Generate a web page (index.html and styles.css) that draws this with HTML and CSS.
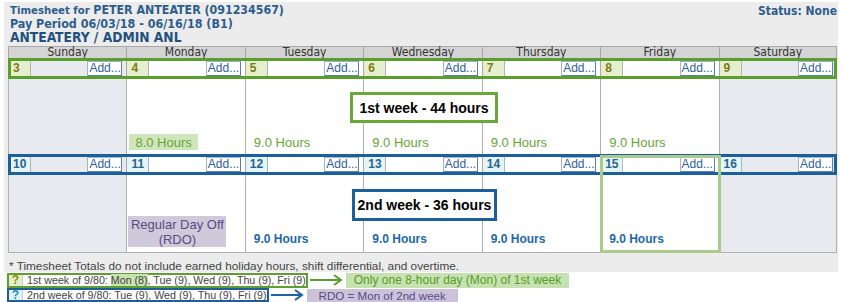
FILE: index.html
```html
<!DOCTYPE html>
<html lang="en">
<head>
  <meta charset="UTF-8" />
  <title>Timesheet - PETER ANTEATER</title>
  <link rel="stylesheet" href="styles.css">
</head>
<body>
  <div class="page">
    <div class="head">
      <div class="head-left">
        <div class="title"><span class="lbl">Timesheet for</span> <span class="who">PETER ANTEATER (091234567)</span></div>
        <div class="period">Pay Period 06/03/18 - 06/16/18 (B1)</div>
        <div class="dept">ANTEATERY / ADMIN ANL</div>
      </div>
      <div class="status">Status: None</div>
    </div>

    <div class="cal">
      <div class="days">
        <div>Sunday</div><div>Monday</div><div>Tuesday</div><div>Wednesday</div>
        <div>Thursday</div><div>Friday</div><div>Saturday</div>
      </div>

      <!-- week 1 -->
      <div class="dates wk1">
        <div class="date off"><span class="num">3</span><span class="fill"><button class="add">Add...</button></span></div>
        <div class="date"><span class="num">4</span><span class="fill"><button class="add">Add...</button></span></div>
        <div class="date"><span class="num">5</span><span class="fill"><button class="add">Add...</button></span></div>
        <div class="date"><span class="num">6</span><span class="fill"><button class="add">Add...</button></span></div>
        <div class="date"><span class="num">7</span><span class="fill"><button class="add">Add...</button></span></div>
        <div class="date"><span class="num">8</span><span class="fill"><button class="add">Add...</button></span></div>
        <div class="date off"><span class="num">9</span><span class="fill"><button class="add">Add...</button></span></div>
      </div>
      <div class="week wk1">
        <div class="day off"></div>
        <div class="day"><span class="hrs mon8">8.0 Hours</span></div>
        <div class="day"><span class="hrs">9.0 Hours</span></div>
        <div class="day"><span class="hrs">9.0 Hours</span></div>
        <div class="day"><span class="hrs">9.0 Hours</span></div>
        <div class="day"><span class="hrs">9.0 Hours</span></div>
        <div class="day off"></div>
      </div>

      <!-- week 2 -->
      <div class="dates wk2">
        <div class="date off"><span class="num">10</span><span class="fill"><button class="add">Add...</button></span></div>
        <div class="date"><span class="num">11</span><span class="fill"><button class="add">Add...</button></span></div>
        <div class="date"><span class="num">12</span><span class="fill"><button class="add">Add...</button></span></div>
        <div class="date"><span class="num">13</span><span class="fill"><button class="add">Add...</button></span></div>
        <div class="date"><span class="num">14</span><span class="fill"><button class="add">Add...</button></span></div>
        <div class="date"><span class="num">15</span><span class="fill"><button class="add">Add...</button></span></div>
        <div class="date off"><span class="num">16</span><span class="fill"><button class="add">Add...</button></span></div>
      </div>
      <div class="week wk2">
        <div class="day off"></div>
        <div class="day"><span class="rdo">Regular Day Off<br>(RDO)</span></div>
        <div class="day"><span class="hrs">9.0 Hours</span></div>
        <div class="day"><span class="hrs">9.0 Hours</span></div>
        <div class="day"><span class="hrs">9.0 Hours</span></div>
        <div class="day"><span class="hrs">9.0 Hours</span></div>
        <div class="day off"></div>
      </div>

      <div class="total total1">1st week - 44 hours</div>
      <div class="total total2">2nd week - 36 hours</div>
      <div class="fri-mark"></div>
    </div>

    <div class="note">* Timesheet Totals do not include earned holiday hours, shift differential, and overtime.</div>
  </div>

  <div class="legend">
    <div class="leg-row">
      <div class="leg-box g"><span class="q">?</span><span class="leg-text">1st week of 9/80: <span class="mark">Mon (8)</span>, Tue (9), Wed (9), Thu (9), Fri (9)</span></div>
      <svg class="arrow" width="34" height="12" viewBox="0 0 34 12">
        <line x1="0" y1="6" x2="30" y2="6" stroke="#5a9e2e" stroke-width="2"/>
        <polyline points="24,1 31,6 24,11" fill="none" stroke="#5a9e2e" stroke-width="2"/>
      </svg>
      <div class="tag tag-g">Only one 8-hour day (Mon) of 1st week</div>
    </div>
    <div class="leg-row">
      <div class="leg-box b"><span class="q">?</span><span class="leg-text">2nd week of 9/80: Tue (9), Wed (9), Thu (9), Fri (9)</span></div>
      <svg class="arrow" width="34" height="12" viewBox="0 0 34 12">
        <line x1="0" y1="6" x2="30" y2="6" stroke="#1f64a3" stroke-width="2"/>
        <polyline points="24,1 31,6 24,11" fill="none" stroke="#1f64a3" stroke-width="2"/>
      </svg>
      <div class="tag tag-p">RDO = Mon of 2nd week</div>
    </div>
  </div>
</body>
</html>
```

FILE: styles.css
```css
* {
  box-sizing: border-box;
}

body {
  margin: 0;
  font-family: "Liberation Sans", Arial, sans-serif;
  background-color: #fff;
  color: #333;
}

.page {
  margin: 2px 3px 0 4px;
  padding: 0 1px 0 4px;
  background-color: #ececec;
}

/* header */

.head {
  display: flex;
  justify-content: space-between;
  padding: 2px 0 0 2px;
  height: 44px;
  font-family: "DejaVu Sans Condensed", "DejaVu Sans", sans-serif;
  font-weight: bold;
  color: #2d5d8c;
}

.title { line-height: 13px; font-size: 11.3px; }
.title .who { font-size: 12.3px; }
.period { line-height: 13px; font-size: 12.4px; }
.dept { line-height: 14px; font-size: 13.7px; color: #23507e; }

.status {
  font-size: 12px;
  line-height: 14px;
}

/* calendar */

.cal {
  position: relative;
  width: 829px;
  background-color: #fff;
}

.days,
.dates,
.week {
  display: grid;
  grid-template-columns: repeat(7, 1fr);
}

.days div {
  height: 12px;
  background-color: #d4d4d4;
  border-left: 1px solid #a9a9a9;
  border-top: 1px solid #a9a9a9;
  text-align: center;
  font-family: "DejaVu Sans Condensed", "DejaVu Sans", sans-serif;
  font-size: 12px;
  line-height: 11px;
  color: #333;
}

.days div:last-child { border-right: 1px solid #a9a9a9; }

.dates {
  position: relative;
  height: 21px;
}

.dates::after {
  content: "";
  position: absolute;
  inset: 0;
  border: 3px solid #5a9e2e;
  pointer-events: none;
}

.dates.wk2::after { border-color: #1b5f9b; }

.date {
  display: flex;
  padding: 3px 0;
  border-left: 1px solid #a9a9a9;
}

.num {
  width: 22px;
  padding-left: 4px;
  border-right: 1px solid #b4b4b4;
  font-size: 12px;
  font-weight: bold;
  line-height: 15px;
}

.wk1 .num { background-color: #e6efcd; color: #7b7b14; }
.wk2 .num { background-color: #e2f5f8; color: #2b628c; }

.fill {
  flex: 1;
  display: flex;
  justify-content: flex-end;
  align-items: center;
  padding-right: 4px;
  background-color: #fff;
}

.off .fill { background-color: #e8eaef; }

.add {
  font-family: "Liberation Sans", Arial, sans-serif;
  font-size: 12px;
  line-height: 13px;
  color: #2f61a3;
  background-color: #fff;
  border: 1px solid #9fb4cf;
  border-right-color: #5b7fae;
  border-bottom-color: #5b7fae;
  padding: 0 1px;
  margin: 0;
  width: 35px;
  height: 15px;
}

.week .day {
  height: 75px;
  display: flex;
  flex-direction: column;
  justify-content: flex-end;
  align-items: flex-start;
  padding: 0 0 4px 8px;
  border-left: 1px solid #b0b0b0;
}

.week .day:last-child { border-right: 1px solid #b0b0b0; }
.week.wk2 .day { border-bottom: 1px solid #b0b0b0; height: 78px; padding-bottom: 5px; }
.week .day.off { background-color: #e8eaef; }

.hrs {
  font-size: 13px;
  line-height: 15px;
}

.wk1 .hrs { color: #66a536; }
.wk2 .hrs { color: #1c67ad; font-weight: bold; font-size: 12px; }

.hrs.mon8 {
  background-color: #cfe6bd;
  margin-left: -6px;
  padding: 1px 6px 0 6px;
}

.rdo {
  margin-left: -7px;
  width: 98px;
  padding: 1px 0 0;
  height: 31px;
  background-color: #d0c9dc;
  color: #584c7e;
  font-size: 13px;
  line-height: 15px;
  text-align: center;
}

/* overlays */

.total {
  position: absolute;
  background-color: #fff;
  border: 3px solid #6aa83a;
  font-size: 14px;
  font-weight: bold;
  color: #000;
  display: flex;
  align-items: center;
  justify-content: center;
}

.total1 { left: 342px; top: 46px; width: 148px; height: 31px; }
.total2 { left: 344px; top: 143px; width: 145px; height: 32px; border-color: #1b5f9b; }

.fri-mark {
  position: absolute;
  left: 592px;
  top: 109px;
  width: 121px;
  height: 98px;
  border: 3px solid #a9cc8c;
}

.note {
  padding: 7px 0 0 1px;
  height: 19px;
  font-size: 11.8px;
  line-height: 12px;
  color: #444;
}

/* legend */

.legend {
  padding-left: 7px;
  font-size: 10.7px;
}

.leg-row {
  display: flex;
  align-items: center;
  height: 16px;
}

.leg-row + .leg-row { height: 14px; }

.leg-box {
  display: flex;
  border: 2px solid #5f9e31;
  height: 15px;
  line-height: 11px;
  color: #444;
}

.leg-box.b { border-color: #1f5f99; height: 14px; line-height: 10px; }

.q {
  width: 14px;
  text-align: center;
  font-weight: bold;
  font-size: 12px;
  border-right: 1px solid #c8c8c8;
  margin-right: 4px;
}

.g .q { background-color: #e3efcb; color: #8c8c00; }
.b .q { background-color: #e0f3f8; color: #1f8cc0; }

.mark { background-color: #c8e2b0; }

.arrow { margin: 0 2px; }

.tag {
  height: 15px;
  line-height: 15px;
  padding: 0 8px;
}

.tag-g { background-color: #c6e2b0; color: #5a9a2a; font-size: 12px; }
.tag-p {
  background-color: #cbc3da;
  color: #5a4a87;
  font-size: 11.6px;
  padding: 0 12px;
  height: 13px;
  line-height: 13px;
}
```
